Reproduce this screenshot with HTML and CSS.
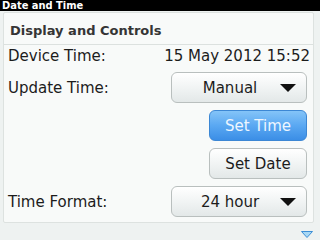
FILE: index.html
```html
<!DOCTYPE html>
<html>
<head>
<meta charset="utf-8">
<link rel="stylesheet" href="styles.css">
</head>
<body>
<div class="titlebar">Date and Time</div>
<div class="panel">
  <div class="panel-head">Display and Controls</div>
  <div class="panel-body">
    <div class="row info">
      <span class="label">Device Time:</span>
      <span class="value">15 May 2012 15:52</span>
    </div>
    <div class="row">
      <span class="label">Update Time:</span>
      <div class="dropdown"><span class="dd-text">Manual</span><svg class="dd-arrow" width="16" height="8" viewBox="0 0 16 8"><path d="M0 0H16L8 8Z" fill="#111"/></svg></div>
    </div>
    <div class="row end">
      <div class="btn primary">Set Time</div>
    </div>
    <div class="row end">
      <div class="btn">Set Date</div>
    </div>
    <div class="row">
      <span class="label">Time Format:</span>
      <div class="dropdown"><span class="dd-text">24 hour</span><svg class="dd-arrow" width="16" height="8" viewBox="0 0 16 8"><path d="M0 0H16L8 8Z" fill="#111"/></svg></div>
    </div>
  </div>
</div>
<div class="footer">
  <svg width="12" height="7" viewBox="0 0 12 7"><path d="M0.5 0.5H11.5L6 6.5Z" fill="#a8d8f4" stroke="#3d8fd6" stroke-width="1"/></svg>
</div>
</body>
</html>
```
FILE: styles.css
```css
html, body {
  margin: 0;
  padding: 0;
}
body {
  width: 320px;
  height: 240px;
  overflow: hidden;
  background: #eef2f1;
  font-family: "DejaVu Sans", "Liberation Sans", sans-serif;
  color: #1c1c1c;
}
.titlebar {
  height: 11px;
  line-height: 11px;
  background: #000;
  color: #fff;
  font-family: "DejaVu Sans Condensed", "DejaVu Sans", sans-serif;
  font-stretch: condensed;
  font-weight: bold;
  font-size: 11px;
  padding-left: 2px;
  white-space: nowrap;
  overflow: hidden;
}
.panel {
  margin: 1px 6px 0 3px;
  border: 1px solid #dde2e0;
  border-radius: 2px;
  background: #f8faf9;
}
.panel-head {
  padding: 4px 0 0 6px;
  height: 27px;
  line-height: 27px;
  font-size: 13px;
  font-weight: bold;
  color: #353535;
  border-bottom: 1px solid #dce1df;
}
.panel-body {
  display: flex;
  flex-direction: column;
  gap: 7px;
  padding: 3px 6px 5px 4px;
}
.row {
  display: flex;
  align-items: center;
  justify-content: space-between;
  font-size: 15px;
}
.row.end {
  justify-content: flex-end;
}
.info {
  height: 17px;
  line-height: 17px;
}
.value {
  margin-right: -3px;
}
.dropdown {
  box-sizing: border-box;
  width: 136px;
  height: 31px;
  display: flex;
  align-items: center;
  padding: 0 10px;
  border: 1px solid #b9bfbe;
  border-radius: 6px;
  background: linear-gradient(#ffffff, #f1f4f4 50%, #e3e8e8);
  box-shadow: inset 0 1px 0 #fff;
}
.dd-text {
  flex: 1;
  text-align: center;
}
.dd-arrow {
  margin-left: 2px;
  flex: none;
}
.btn {
  box-sizing: border-box;
  width: 98px;
  height: 31px;
  display: flex;
  align-items: center;
  justify-content: center;
  border: 1px solid #b9bfbe;
  border-radius: 6px;
  background: linear-gradient(#ffffff, #f1f4f4 50%, #e3e8e8);
}
.btn.primary {
  border-color: #3c87d4;
  background: linear-gradient(#84c4f8, #5aa8f2 50%, #3b8ee6);
  color: #eef6ff;
}
.footer {
  display: flex;
  justify-content: flex-end;
  padding: 8px 7px 0 0;
}
```
